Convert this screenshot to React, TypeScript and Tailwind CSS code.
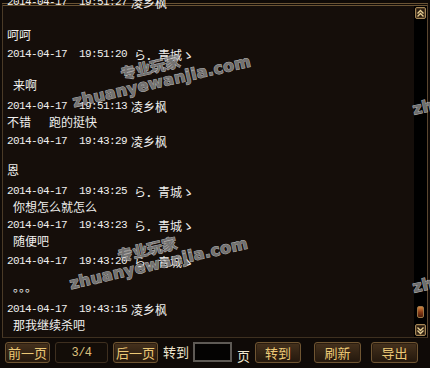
import React from "react";

const MONO = "font-['Liberation_Mono',monospace] text-[11px] tracking-[-0.6px]";
const CJK = "font-['Noto_Sans_CJK_SC',sans-serif] text-[12px]";

type ChatLine = {
  mt: string;
  time?: string;
  name?: string;
  text?: string;
};

const LINES: ChatLine[] = [
  { mt: "mt-[-14px]", time: "2014-04-17  19:51:27", name: "凌乡枫" },
  { mt: "mt-[17px]", text: "呵呵" },
  { mt: "mt-[1px]", time: "2014-04-17  19:51:20", name: "ら．青城ゝ" },
  { mt: "mt-[15px]", text: " 来啊" },
  { mt: "mt-[3px]", time: "2014-04-17  19:51:13", name: "凌乡枫" },
  { mt: "mt-[0px]", text: "不错   跑的挺快" },
  { mt: "mt-[1px]", time: "2014-04-17  19:43:29", name: "凌乡枫" },
  { mt: "mt-[13px]", text: "恩" },
  { mt: "mt-[3px]", time: "2014-04-17  19:43:25", name: "ら．青城ゝ" },
  { mt: "mt-[0px]", text: " 你想怎么就怎么" },
  { mt: "mt-[0px]", time: "2014-04-17  19:43:23", name: "ら．青城ゝ" },
  { mt: "mt-[0px]", text: " 随便吧" },
  { mt: "mt-[2px]", time: "2014-04-17  19:43:20", name: "ら．青城ゝ" },
  { mt: "mt-[13px]", text: " 。。。" },
  { mt: "mt-[1px]", time: "2014-04-17  19:43:15", name: "凌乡枫" },
  { mt: "mt-[0px]", text: " 那我继续杀吧" },
];

function Line({ line }: { line: ChatLine }) {
  if (line.time !== undefined) {
    const gap = line.name!.startsWith("ら") ? "ml-[7px]" : "ml-[4px]";
    return (
      <div className={`${line.mt} relative top-[2px] h-[17px] leading-[17px] whitespace-pre text-[#f0f0ee] flex items-center`}>
        <span className={MONO}>{line.time}</span>
        <span className={`${CJK} ${gap}`}>{line.name}</span>
      </div>
    );
  }
  return (
    <div className={`${line.mt} h-[17px] leading-[17px] whitespace-pre text-[#f0f0ee] flex items-center`}>
      {line.text!.split(/( +)/).map((part, i) =>
        part.startsWith(" ") ? (
          <span key={i} className={MONO}>{part}</span>
        ) : part === "。。。" ? (
          <span key={i} className={`${CJK} relative top-[-3px]`}>{part}</span>
        ) : (
          <span key={i} className={CJK}>{part}</span>
        )
      )}
    </div>
  );
}

function Chevrons({ down }: { down?: boolean }) {
  return (
    <svg width="9" height="9" viewBox="0 0 9 9" className={down ? "rotate-180" : ""}>
      <path d="M1.5 4.5 L4.5 1.5 L7.5 4.5" fill="none" stroke="#e8cf93" strokeWidth="1.4" />
      <path d="M1.5 7.5 L4.5 4.5 L7.5 7.5" fill="none" stroke="#e8cf93" strokeWidth="1.4" />
    </svg>
  );
}

function ScrollBtn({ down }: { down?: boolean }) {
  return (
    <div className="w-[11px] h-[12px] mx-auto flex items-center justify-center rounded-[2px] border border-[#a58757] bg-[#2a1d11] shadow-[inset_0_0_0_1px_#4a3620]">
      <Chevrons down={down} />
    </div>
  );
}

function Btn({ label, w }: { label: string; w: string }) {
  return (
    <div
      className={`${w} h-[21px] flex items-center justify-center rounded-[3px] border border-[#6f5532] bg-gradient-to-b from-[#46321d] to-[#24180d] shadow-[inset_0_0_0_1px_#2b1d10] text-[#ecc976] ${CJK} text-[13px]`}
    >
      {label}
    </div>
  );
}

const WM = "text-[#8a8a8a] [-webkit-text-stroke:1px_#d8d8d8] [paint-order:stroke_fill] font-bold whitespace-nowrap";

function Watermark({ pos }: { pos: string }) {
  return (
    <div className={`absolute ${pos} -translate-x-1/2 -translate-y-1/2 rotate-[-13deg] opacity-80 pointer-events-none flex flex-col items-center`}>
      <span className={`${WM} font-['Noto_Sans_CJK_SC',sans-serif] text-[15px] leading-[16px] -ml-[16px]`}>专业玩家</span>
      <span className={`${WM} font-['DejaVu_Sans',sans-serif] text-[16px] leading-[18px] tracking-[0.3px]`}>zhuanyewanjia.com</span>
    </div>
  );
}

export default function App() {
  return (
    <div className="relative w-[430px] h-[368px] overflow-hidden bg-[#0f0a07] pt-[3px]">
      <div className="mx-[2px] h-[335px] flex border-t-[3px] border-double border-[#6a5334] border-l border-l-[#4a3a27] border-r border-r-[#5a4630] border-b border-b-[#3e3020]">
        <div className="flex-1 bg-[#150e0a] pl-[4px]">
          {LINES.map((l, i) => (
            <Line key={i} line={l} />
          ))}
        </div>
        <div className="w-[13px] bg-black flex flex-col pt-[1px] pb-[1px]">
          <ScrollBtn />
          <div className="flex-1" />
          <div className="w-[7px] h-[12px] mx-auto rounded-[2px] border border-[#9a7445] bg-gradient-to-b from-[#d0843f] via-[#8a3c17] to-[#4a1d0a]" />
          <div className="h-[6px]" />
          <ScrollBtn down />
        </div>
      </div>

      <div className="flex items-start pt-[4px] pl-[5px]">
        <Btn label="前一页" w="w-[45px]" />
        <div className={`ml-[5px] w-[53px] h-[21px] flex items-center justify-center rounded-[3px] border border-[#3e2f1f] bg-[#130d08] text-[#dcc07e] ${MONO} text-[12px]`}>
          3/4
        </div>
        <div className="ml-[5px]">
          <Btn label="后一页" w="w-[45px]" />
        </div>
        <div className={`ml-[5px] h-[19px] leading-[19px] text-[#efe6cf] ${CJK} text-[13px]`}>转到</div>
        <div className="ml-[4px] w-[39px] h-[20px] bg-[#040302] border-2 border-[#5e5a55]" />
        <div className={`ml-[5px] mt-[5px] h-[17px] leading-[17px] text-[#efe6cf] ${CJK} text-[13px]`}>页</div>
        <div className="ml-[5px]">
          <Btn label="转到" w="w-[46px]" />
        </div>
        <div className="ml-[13px]">
          <Btn label="刷新" w="w-[47px]" />
        </div>
        <div className="ml-[10px]">
          <Btn label="导出" w="w-[47px]" />
        </div>
      </div>

      <Watermark pos="left-[160px] top-[74px]" />
      <Watermark pos="left-[157px] top-[256px]" />
      <span className={`absolute left-[413px] top-[98px] origin-left rotate-[-13deg] opacity-80 font-['DejaVu_Sans',sans-serif] text-[16px] ${WM}`}>
        zhuanyewanjia.com
      </span>
      <span className={`absolute left-[413px] top-[276px] origin-left rotate-[-13deg] opacity-80 font-['DejaVu_Sans',sans-serif] text-[16px] ${WM}`}>
        zhuanyewanjia.com
      </span>
    </div>
  );
}
